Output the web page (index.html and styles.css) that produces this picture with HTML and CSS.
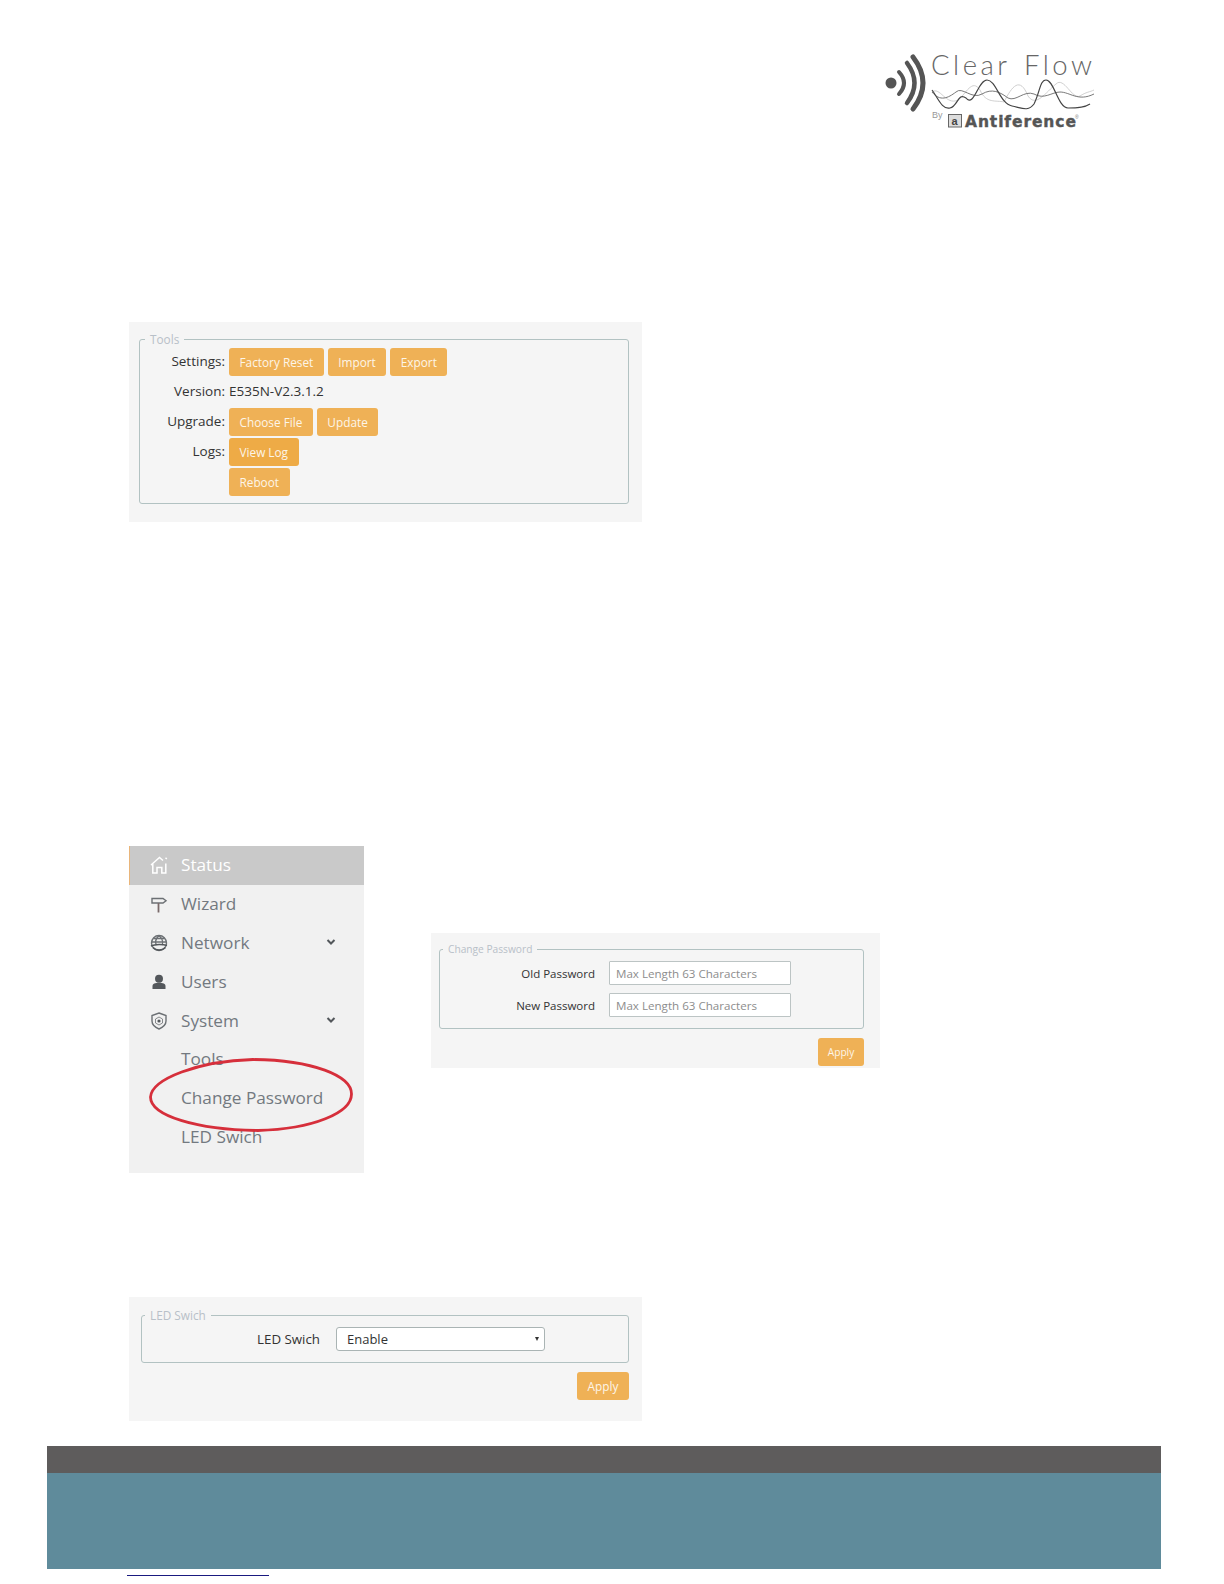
FILE: index.html
```html
<!DOCTYPE html>
<html lang="en">
<head>
<meta charset="utf-8">
<title>Clear Flow manual page</title>
<link rel="stylesheet" href="styles.css">
</head>
<body>
<div class="page">
  <header class="head">
    <svg class="logo" width="212" height="78" viewBox="885 54 212 78">
      <circle cx="891" cy="83" r="5.500" fill="#555"/>
      <path d="M899 72 Q909 83 899 94" class="arc a1"/>
      <path d="M907 63 Q922 83 907 103" class="arc a2"/>
      <path d="M913 57 Q933 83 913 109" class="arc a3"/>
      <text x="931" y="75" class="logo-name">Clear Flow</text>
      <path class="wave w1" d="M932 92 C940 86 946 106 958 100 C966 94 972 78 980 90 C986 104 996 100 1004 102 C1012 86 1020 76 1028 96 C1036 108 1046 92 1056 84 C1064 76 1072 100 1080 96 C1086 92 1090 92 1094 90"/>
      <path class="wave w2" d="M932 92 C940 102 948 98 956 92 C962 86 972 100 982 94 C992 88 1000 92 1008 98 C1016 102 1024 90 1034 94 C1044 100 1052 92 1060 92 C1070 92 1078 102 1094 94"/>
      <path class="wave w3" d="M932 90 C938 98 942 110 950 108 C958 106 958 92 966 98 C974 108 978 80 987 80 C996 80 1000 104 1012 106 C1022 108 1028 112 1034 104 C1040 92 1040 80 1046 80 C1054 80 1058 108 1068 108 C1076 108 1084 108 1090 104"/>
      <text x="932" y="118" class="logo-by">By</text>
      <rect x="948.500" y="114.500" width="13" height="12.500" class="logo-box"/>
      <text x="951.500" y="124.500" class="logo-a">a</text>
      <text x="965" y="127" class="logo-brand">Antiference</text>
      <text x="1075" y="119" class="logo-reg">®</text>
    </svg>
  </header>

  <section class="panel tools">
    <fieldset class="group">
      <legend>Tools</legend>
      <div class="tool-grid">
        <span class="label">Settings:</span>
        <div class="btns"><button class="btn">Factory Reset</button><button class="btn">Import</button><button class="btn">Export</button></div>
        <span class="label">Version:</span>
        <span class="value">E535N-V2.3.1.2</span>
        <span class="label">Upgrade:</span>
        <div class="btns"><button class="btn">Choose File</button><button class="btn">Update</button></div>
        <span class="label">Logs:</span>
        <div class="btns"><button class="btn active">View Log</button></div>
        <span></span>
        <div class="btns"><button class="btn">Reboot</button></div>
      </div>
    </fieldset>
  </section>

  <div class="middle">
    <nav class="side">
      <a class="item current">
        <svg class="ico" viewBox="0 0 18 18"><path class="ln w" d="M1 9 L9.500 1.500 L13 4.500 M15.500 1.800 L16.800 3 M2.800 8 V17 H7 V11.500 H11.800 V17 H15.800 V7.500"/></svg>
        <span>Status</span>
      </a>
      <a class="item">
        <svg class="ico" viewBox="0 0 18 18"><path class="ln" d="M2 3.500 H13 L16 5.800 L13 8 H2 Z"/><path class="ln dark" d="M8.500 8 V17.500"/></svg>
        <span>Wizard</span>
      </a>
      <a class="item">
        <svg class="ico" viewBox="0 0 18 18"><circle class="ln" cx="9" cy="9" r="7.500"/><path class="ln" d="M1.500 8 H16.500 M9 1.500 C5 5 5 9 6.500 11 M9 1.500 C13 5 13 9 12 11 M3.500 4.500 H14.500"/><path class="ln swoosh" d="M1 12 C5 10 13 10 17 11.500 M3 13.500 C6 17 12 17 15.500 13.500"/></svg>
        <span>Network</span>
        <svg class="chev" viewBox="0 0 10 8"><path d="M1.500 2 L5 5.500 L8.500 2"/></svg>
      </a>
      <a class="item">
        <svg class="ico" viewBox="0 0 18 18"><circle class="fill" cx="9" cy="5.800" r="4"/><path class="fill" d="M2.500 16 V13 C2.500 10.700 5 9.700 9 9.700 C13 9.700 15.500 10.700 15.500 13 V16 Z"/></svg>
        <span>Users</span>
      </a>
      <a class="item">
        <svg class="ico" viewBox="0 0 18 18"><path class="ln" d="M9 1 L16 3.500 V9 C16 13 12.500 15.500 9 17 C5.500 15.500 2 13 2 9 V3.500 Z"/><path class="ln thin" d="M9 5 L12.500 7 V11 L9 13 L5.500 11 V7 Z"/><circle class="fill" cx="9" cy="9" r="1.600"/></svg>
        <span>System</span>
        <svg class="chev" viewBox="0 0 10 8"><path d="M1.500 2 L5 5.500 L8.500 2"/></svg>
      </a>
      <a class="item sub"><span>Tools</span></a>
      <a class="item sub"><span>Change Password</span></a>
      <a class="item sub"><span>LED Swich</span></a>
      <svg class="circle" width="206" height="74" viewBox="0 0 206 74"><path d="M2.500 39 C4 21 50 3 105 1.500 C165 2 203.500 18 203.500 36 C203.500 55 165 71 110 72.500 C50 72 2.500 58 2.500 39 Z"/></svg>
    </nav>

    <section class="panel pass">
      <fieldset class="group">
        <legend>Change Password</legend>
        <div class="pass-grid">
          <label class="field-label" for="old">Old Password</label>
          <input id="old" class="input" type="text" placeholder="Max Length 63 Characters">
          <label class="field-label" for="new">New Password</label>
          <input id="new" class="input" type="text" placeholder="Max Length 63 Characters">
        </div>
      </fieldset>
      <div class="actions"><button class="btn apply">Apply</button></div>
    </section>
  </div>

  <section class="panel led">
    <fieldset class="group">
      <legend>LED Swich</legend>
      <div class="led-row">
        <label class="field-label" for="ledsel">LED Swich</label>
        <div class="select-wrap"><select id="ledsel" class="select"><option>Enable</option></select></div>
      </div>
    </fieldset>
    <div class="actions"><button class="btn apply">Apply</button></div>
  </section>

  <footer class="foot">
    <div class="foot-top"></div>
    <div class="foot-main"></div>
  </footer>
  <div class="rule"></div>
</div>
</body>
</html>
```

FILE: styles.css
```css
* { box-sizing: border-box; }
html, body { margin: 0; padding: 0; background: #fff; }
.page {
  width: 1224px;
  height: 1584px;
  overflow: hidden;
  font-family: "Open Sans", "Noto Sans", sans-serif;
  color: #333;
}

/* logo */
.head { display: flex; justify-content: flex-end; padding: 54px 127px 0 0; height: 132px; }
.logo { display: block; overflow: visible; }
.arc { fill: none; stroke: #555; stroke-linecap: round; }
.a1 { stroke-width: 4; }
.a2 { stroke-width: 4.500; }
.a3 { stroke-width: 5; }
.logo-name { font-family: Lato, sans-serif; font-weight: 300; font-size: 27.500px; letter-spacing: 3.500px; word-spacing: 3px; fill: #666; }
.wave { fill: none; }
.w1 { stroke: #c4c4c4; stroke-width: .8; }
.w2 { stroke: #6a6a6a; stroke-width: .9; }
.w3 { stroke: #444; stroke-width: 1.200; }
.logo-by { font-family: "Liberation Sans", sans-serif; font-size: 9px; fill: #999; }
.logo-box { fill: #ddd; stroke: #666; }
.logo-a { font-family: "Liberation Sans", sans-serif; font-weight: 700; font-size: 11px; fill: #444; }
.logo-brand { font-family: "DejaVu Sans", sans-serif; font-weight: 700; font-size: 15.500px; letter-spacing: .9px; fill: #555; stroke: #555; stroke-width: .4; }
.logo-reg { font-family: "Liberation Sans", sans-serif; font-size: 5px; fill: #777; }

/* panels */
.panel { background: #f5f5f5; }
.group { margin: 0; padding: 0; border: 1px solid #b2c2c2; border-radius: 3px; min-width: 0; }
.group legend { margin-left: 5px; padding: 0 5px; font-size: 11.800px; line-height: 14px; color: #b8c0c8; }

.btn {
  height: 28px;
  padding: 0 10.500px;
  border: 0;
  border-radius: 3px;
  background: #efb156;
  color: #fdf5e8;
  font-family: inherit;
  font-size: 11.800px;
  white-space: nowrap;
}
.btn.active { background: #eeab46; }
.btns { display: flex; gap: 4px; }

.tools { margin: 190px 0 0 129px; width: 513px; height: 200px; padding: 10px 13px 0 10px; }
.tool-grid {
  display: grid;
  grid-template-columns: 85px 1fr;
  column-gap: 4px;
  row-gap: 2px;
  grid-auto-rows: 28px;
  align-items: center;
  padding-top: 2px;
  padding-bottom: 7px;
}
.label { text-align: right; font-size: 13.500px; color: #333; margin-top: -3px; }
.value { font-size: 13.500px; color: #333; margin-top: -3px; }

/* middle */
.middle { display: flex; align-items: flex-start; margin: 324px 0 0 129px; }
.side {
  position: relative;
  width: 235px;
  height: 327px;
  background: #f1f1f1;
  display: flex;
  flex-direction: column;
}
.item {
  display: flex;
  align-items: center;
  height: 38.900px;
  padding-left: 21px;
  font-size: 17.200px;
  color: #737980;
}
.item span { margin-top: -2px; }
.item.current { background: #c9c9c9; color: #fff; border-left: 1px solid #e9b57a; padding-left: 20px; }
.item.sub { padding-left: 52px; }
.ico { width: 18px; height: 18px; margin-right: 13px; flex: none; }
.ln { fill: none; stroke: #6c7074; stroke-width: 1.400; }
.ln.w { stroke: #fff; stroke-width: 1.500; }
.ln.dark { stroke: #7a6a6a; stroke-width: 1.800; }
.ln.thin { stroke-width: .8; }
.ln.swoosh { stroke: #53575b; stroke-width: 1.600; }
.fill { fill: #53575b; }
.chev { width: 10px; height: 8px; margin-left: auto; margin-right: 28px; margin-top: -2px; }
.chev path { fill: none; stroke: #53575b; stroke-width: 2; }
.circle { position: absolute; left: 19px; top: 212px; }
.circle path { fill: none; stroke: #d62f3b; stroke-width: 2.800; }

.pass { width: 449px; height: 135px; margin: 87px 0 0 67px; padding: 9px 16px 0 8px; }
.pass .group legend { font-size: 10.200px; margin-left: 3px; }
.pass-grid {
  display: grid;
  grid-template-columns: 155px 182px;
  column-gap: 14px;
  row-gap: 8px;
  align-items: center;
  padding-top: 5px;
  padding-bottom: 11px;
}
.field-label { text-align: right; font-size: 11.500px; color: #333; }
.input {
  width: 182px;
  height: 24px;
  padding: 0 6px;
  border: 1px solid #bcc4c4;
  border-radius: 1px;
  background: #fff;
  font-family: inherit;
  font-size: 11.600px;
}
.input::placeholder { color: #8d8d8d; opacity: 1; }
.actions { display: flex; justify-content: flex-end; margin-top: 9px; }
.apply { padding: 0; width: 52px; }
.pass .apply { width: 46px; font-size: 10.200px; }

.led { margin: 124px 0 0 129px; width: 513px; height: 124px; padding: 11px 13px 0 12px; }
.led .group legend { margin-left: 3px; }
.led-row { display: flex; align-items: center; gap: 16px; padding: 5px 0 11px 0; }
.led-row .field-label { font-size: 13.300px; width: 178px; }
.select-wrap { position: relative; width: 209px; height: 24px; }
.select-wrap::after {
  content: "";
  position: absolute;
  right: 6px;
  top: 10px;
  border-left: 2.500px solid transparent;
  border-right: 2.500px solid transparent;
  border-top: 4px solid #333;
}
.select {
  display: block;
  appearance: none;
  width: 209px;
  height: 24px;
  padding: 0 10px;
  border: 1px solid #aab4b4;
  border-radius: 3px;
  background: #fff;
  color: #333;
  font-family: inherit;
  font-size: 13px;
}

/* footer */
.foot { margin: 25px 0 0 47px; width: 1114px; }
.foot-top { height: 27px; background: #5e5c5c; }
.foot-main { height: 96px; background: #5f8b9b; }
.rule { margin: 6px 0 0 127px; width: 142px; height: 1px; background: #1a1a80; }
```
